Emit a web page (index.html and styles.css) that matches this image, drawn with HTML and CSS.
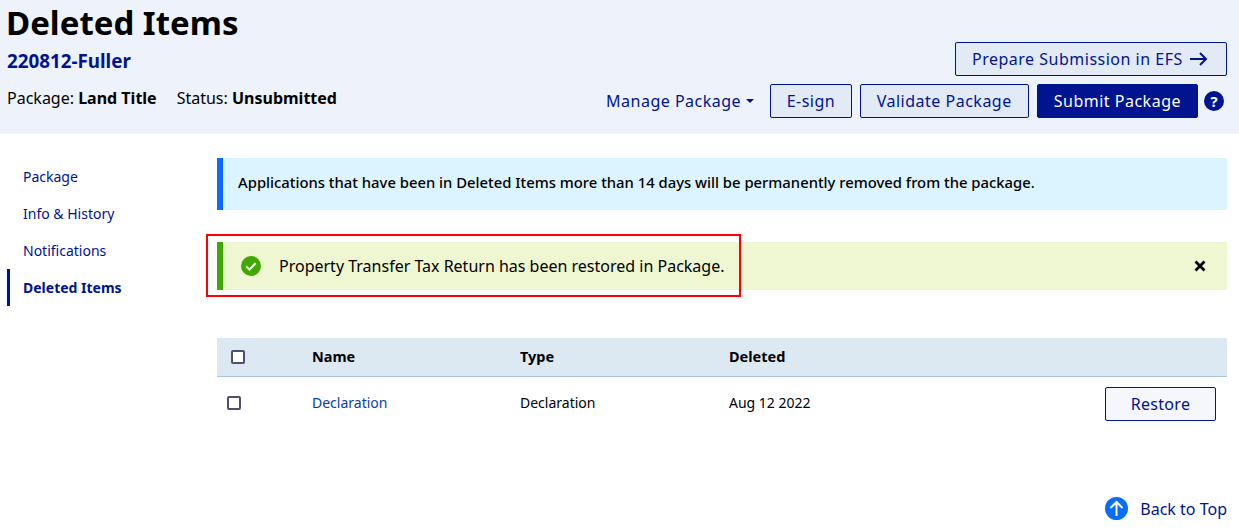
FILE: index.html
```html
<!DOCTYPE html>
<html lang="en">
<head>
<meta charset="utf-8">
<title>Deleted Items</title>
<link rel="stylesheet" href="styles.css">
</head>
<body>
<header class="head">
  <div class="head-left">
    <h1 class="title">Deleted Items</h1>
    <a class="pkg-name">220812-Fuller</a>
    <div class="meta">
      <span>Package: <b>Land Title</b></span>
      <span>Status: <b>Unsubmitted</b></span>
    </div>
  </div>
  <div class="head-right">
    <button class="btn btn-efs">Prepare Submission in EFS
      <svg class="arrow" width="19" height="16" viewBox="0 0 19 16"><path d="M1 8H17M11 2l6 6-6 6" fill="none" stroke="#00148f" stroke-width="2"/></svg>
    </button>
    <div class="actions">
      <a class="manage">Manage Package<span class="caret"></span></a>
      <button class="btn btn-esign">E-sign</button>
      <button class="btn btn-validate">Validate Package</button>
      <button class="btn btn-submit">Submit Package</button>
      <svg class="help" width="20" height="20" viewBox="0 0 20 20"><circle cx="10" cy="10" r="10" fill="#00148f"/><text x="10" y="15.5" text-anchor="middle" class="help-q">?</text></svg>
    </div>
  </div>
</header>
<div class="body">
  <nav class="side">
    <a class="side-item">Package</a>
    <a class="side-item">Info &amp; History</a>
    <a class="side-item">Notifications</a>
    <a class="side-item active">Deleted Items</a>
  </nav>
  <main class="main">
    <div class="alert alert-info">Applications that have been in Deleted Items more than 14 days will be permanently removed from the package.</div>
    <div class="alert alert-ok">
      <svg class="ok-icon" width="20" height="20" viewBox="0 0 20 20"><circle cx="10" cy="10" r="10" fill="#42a800"/><path d="M5.2 10.4l3.3 3.2 6.2-6.6" fill="none" stroke="#fff" stroke-width="2"/></svg>
      <span class="ok-text">Property Transfer Tax Return has been restored in Package.</span>
      <svg class="close" width="12" height="12" viewBox="0 0 12 12"><path d="M1.5 1.5l9 9M10.5 1.5l-9 9" stroke="#000" stroke-width="2.8"/></svg>
      <div class="highlight"></div>
    </div>
    <div class="table">
      <div class="tr th">
        <div class="c-check"><span class="check"></span></div>
        <div class="c-name">Name</div>
        <div class="c-type">Type</div>
        <div class="c-date">Deleted</div>
      </div>
      <div class="tr td">
        <div class="c-check"><span class="check"></span></div>
        <div class="c-name"><a class="link">Declaration</a></div>
        <div class="c-type">Declaration</div>
        <div class="c-date">Aug 12 2022</div>
        <button class="btn btn-restore">Restore</button>
      </div>
    </div>
    <div class="top-row">
      <a class="back">
        <svg width="23" height="23" viewBox="0 0 23 23"><circle cx="11.5" cy="11.5" r="11.5" fill="#0a6cff"/><path d="M11.5 19V5M5.5 11l6-6 6 6" fill="none" stroke="#fff" stroke-width="2"/></svg>
        <span>Back to Top</span>
      </a>
    </div>
  </main>
</div>
</body>
</html>
```
FILE: styles.css
```css
* { box-sizing: border-box; }
html, body { margin: 0; padding: 0; }
body {
  font-family: "Noto Sans", sans-serif;
  font-size: 14px;
  color: #000;
  background: #fff;
  height: 529px;
  overflow: hidden;
}
.head {
  height: 134px;
  background: #eef2fa;
  display: flex;
  justify-content: space-between;
  padding: 0 12px 0 6px;
}
.head-left { display: flex; flex-direction: column; }
.title {
  margin: 1px 0 0;
  font-size: 33px;
  line-height: 44px;
  font-weight: 700;
}
.pkg-name {
  margin-top: 4px;
  margin-left: 1px;
  font-size: 18.8px;
  line-height: 25px;
  font-weight: 700;
  color: #00148f;
}
.meta {
  margin-top: 12px;
  margin-left: 1px;
  display: flex;
  gap: 20px;
  font-size: 16px;
  line-height: 24px;
}
.head-right {
  display: flex;
  flex-direction: column;
  align-items: flex-end;
  padding-top: 42px;
}
.btn {
  font-family: inherit;
  font-size: 16px;
  line-height: 22px;
  height: 34px;
  padding: 0 16px;
  border: 1px solid #00148f;
  border-radius: 2px;
  background: #e1eaf5;
  color: #00148f;
  letter-spacing: 0.5px;
}
.btn-efs {
  display: flex;
  align-items: center;
  gap: 6px;
  width: 272px;
}
.arrow { display: block; }
.actions {
  margin-top: 8px;
  display: flex;
  align-items: center;
}
.manage {
  font-size: 16px;
  color: #00148f;
  letter-spacing: 0.5px;
  margin-right: 16px;
  display: flex;
  align-items: center;
}
.caret {
  margin-left: 5px;
  border-left: 4px solid transparent;
  border-right: 4px solid transparent;
  border-top: 4px solid #00148f;
}
.btn-esign { margin-right: 8px; padding: 0 15.5px; }
.btn-validate { margin-right: 8px; }
.btn-submit { background: #00148f; color: #fff; margin-right: 6px; }
.help { display: block; margin-right: 3px; }
.help-q { font-size: 15px; font-weight: 700; fill: #fff; }
.body { display: flex; }
.side {
  width: 217px;
  padding: 24px 0 0 7px;
  display: flex;
  flex-direction: column;
}
.side-item {
  height: 37px;
  padding-left: 16px;
  display: flex;
  align-items: center;
  color: #00148f;
  font-size: 14px;
}
.side-item.active {
  font-weight: 700;
  padding-left: 13px;
  border-left: 3px solid #00148f;
}
.main { width: 1010px; padding-top: 24px; }
.alert {
  display: flex;
  align-items: center;
  position: relative;
}
.alert-info {
  height: 52px;
  background: #dcf4ff;
  border-left: 6px solid #0a6cff;
  padding: 0 0 5px 15px;
  font-size: 14.82px;
  font-weight: 500;
}
.alert-ok {
  margin-top: 32px;
  height: 48px;
  background: #eef7d2;
  border-left: 6px solid #42a800;
  padding: 0 21px 0 18px;
  font-size: 16px;
}
.ok-text { margin-left: 18px; flex: 1; }
.highlight {
  position: absolute;
  left: -17px;
  top: -8px;
  width: 535px;
  height: 63px;
  border: 2px solid #ff0000;
  pointer-events: none;
}
.table { margin-top: 48px; }
.tr { display: flex; align-items: center; }
.th {
  height: 39px;
  background: #dce8f2;
  border-bottom: 1px solid #a9c4da;
  font-weight: 700;
  font-size: 14.5px;
}
.td { height: 53px; }
.c-check { width: 95px; display: flex; }
.th .c-check { padding-left: 14px; }
.td .c-check { padding-left: 10px; }
.c-name, .c-type, .c-date, .c-check { padding-bottom: 2px; }
.th .c-check { padding-bottom: 0; }
.check {
  width: 14px;
  height: 14px;
  border: 2px solid #50506e;
  border-radius: 2px;
  background: #fff;
}
.c-name { width: 208px; }
.c-type { width: 209px; }
.c-date { width: 376px; }
.link { color: #0a3ea8; }
.btn-restore {
  width: 111px;
  padding: 0;
  background: #f5f7fc;
  letter-spacing: 0.3px;
}
.top-row {
  margin-top: 67px;
  display: flex;
  justify-content: flex-end;
}
.back {
  display: flex;
  align-items: center;
  gap: 12px;
  font-size: 16px;
  color: #00148f;
}
```
